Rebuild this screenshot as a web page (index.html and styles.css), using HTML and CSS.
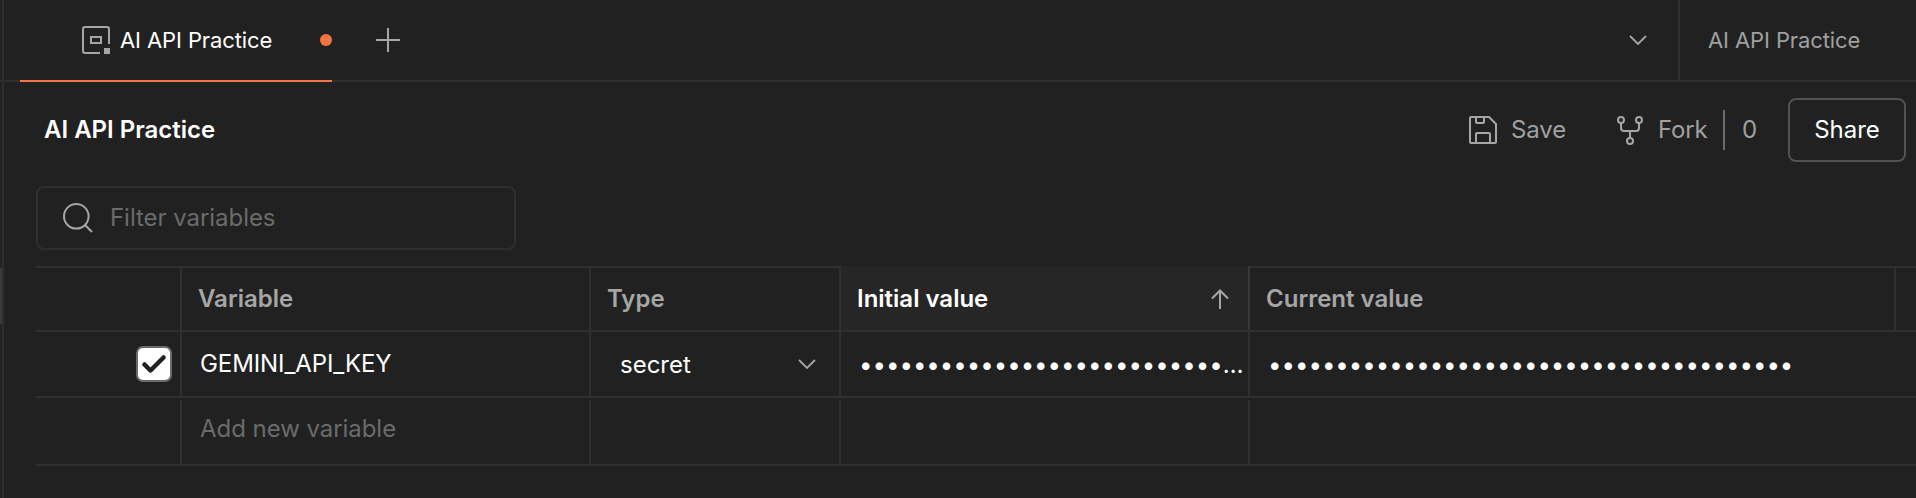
FILE: index.html
```html
<!DOCTYPE html>
<html lang="en">
<head>
<meta charset="utf-8">
<title>AI API Practice</title>
<link rel="stylesheet" href="styles.css">
</head>
<body>
<div class="app">
  <aside class="rail"><div class="rail-thumb"></div></aside>
  <div class="main">
    <header class="tabs">
      <div class="tab">
        <svg class="env-icon" width="28" height="28" viewBox="0 0 28 28"><path d="M27 18V3a2 2 0 0 0-2-2H3a2 2 0 0 0-2 2v22a2 2 0 0 0 2 2h15M9 11h10v6H9z"/><rect class="solid" x="22" y="22" width="6" height="6"/></svg>
        <span class="tab-name">AI API Practice</span>
        <span class="dirty"></span>
      </div>
      <svg class="plus" width="24" height="24" viewBox="0 0 24 24"><path d="M12 0v24M0 12h24"/></svg>
      <svg class="chevron tabs-chevron" width="18" height="11" viewBox="0 0 18 11"><path d="M1 1l8 8 8-8"/></svg>
      <div class="env-select">AI API Practice</div>
    </header>
    <section class="toolbar">
      <h1 class="title">AI API Practice</h1>
      <div class="save">
        <svg width="28" height="28" viewBox="0 0 28 28"><path d="M2 1h18l7 7v18a1 1 0 0 1-1 1H2a1 1 0 0 1-1-1V2a1 1 0 0 1 1-1zM7 1v5a1 1 0 0 0 1 1h6a1 1 0 0 0 1-1V1M7 27v-9a1 1 0 0 1 1-1h12a1 1 0 0 1 1 1v9"/></svg>
        <span class="save-label">Save</span>
      </div>
      <div class="fork">
        <svg width="26" height="29" viewBox="0 0 26 29"><circle cx="4" cy="4" r="3"/><circle cx="22" cy="4" r="3"/><circle cx="13" cy="25" r="3"/><path d="M4 7v5a3 3 0 0 0 3 3h12a3 3 0 0 0 3-3V7M13 15v7"/></svg>
        <span class="fork-label">Fork</span>
        <span class="fork-count">0</span>
      </div>
      <button class="share">Share</button>
    </section>
    <div class="filter">
      <svg width="30" height="30" viewBox="0 0 30 30"><circle cx="13.3" cy="13.3" r="12.3"/><path d="M22 22l7 7"/></svg>
      <span class="filter-text">Filter variables</span>
    </div>
    <div class="table">
      <div class="row head">
        <div class="cell"></div>
        <div class="cell">Variable</div>
        <div class="cell">Type</div>
        <div class="cell sorted"><span class="sorted-label">Initial value</span><svg class="arrow" width="18" height="20" viewBox="0 0 18 20"><path d="M9 20V1.5M1 9.5l8-8 8 8"/></svg></div>
        <div class="cell current-head">Current value</div>
        <div class="cell end"></div>
      </div>
      <div class="row">
        <div class="cell check-cell"><span class="checkbox"><svg width="24" height="19" viewBox="0 0 24 19"><path d="M2.5 9.5l6 6 13-13"/></svg></span></div>
        <div class="cell key">GEMINI_API_KEY</div>
        <div class="cell type"><span class="type-name">secret</span><svg class="chevron" width="18" height="11" viewBox="0 0 18 11"><path d="M1 1l8 8 8-8"/></svg></div>
        <div class="cell secret"><span class="dots">•••••••••••••••••••••••••••</span><span class="more">…</span></div>
        <div class="cell secret last"><span class="dots">•••••••••••••••••••••••••••••••••••••••</span></div>
      </div>
      <div class="row add">
        <div class="cell"></div>
        <div class="cell key">Add new variable</div>
        <div class="cell"></div>
        <div class="cell"></div>
        <div class="cell last"></div>
      </div>
    </div>
  </div>
</div>
</body>
</html>
```
FILE: styles.css
```css
* { box-sizing: border-box; }
body { margin: 0; background: #212121; color: #fff; font: 24px/30px Inter, "Liberation Sans", sans-serif; }
svg { display: block; flex: none; fill: none; stroke: #a6a6a6; stroke-width: 2; }
.app { display: flex; height: 498px; overflow: hidden; background: linear-gradient(#2f2f2f, #2f2f2f) 0 80px / 4px 2px no-repeat; }
.rail { flex: none; width: 4px; padding-top: 268px; border-right: 2px solid #2d2d2d; }
.rail-thumb { height: 56px; background: #3a3a3a; }
.main { flex: 1; min-width: 0; }

.tabs { display: flex; align-items: center; height: 82px; padding-left: 16px; border-bottom: 2px solid #2f2f2f; font-size: 22px; letter-spacing: -0.1px; white-space: nowrap; }
.tab { display: flex; align-items: center; width: 312px; height: 82px; margin-bottom: -2px; padding: 0 0 0 62px; border-bottom: 2px solid #f37542; }
.tab-name { margin-left: 10px; }
.env-icon .solid { fill: #a6a6a6; stroke: none; }
.dirty { width: 12px; height: 12px; margin-left: auto; border-radius: 50%; background: #f37542; }
.plus { margin-left: 44px; }
.chevron { stroke-width: 1.8; }
.tabs-chevron { margin-left: auto; }
.env-select { width: 238px; height: 80px; margin-left: 31px; padding-left: 28px; border-left: 2px solid #2f2f2f; color: #a0a0a0; line-height: 80px; }

.toolbar { display: flex; align-items: center; height: 96px; padding: 0 10px 0 40px; white-space: nowrap; color: #a0a0a0; }
.title { margin: 0 auto 0 0; color: #fff; font-size: 24px; font-weight: 600; }
.save { display: flex; align-items: center; width: 148px; gap: 14px; letter-spacing: -0.1px; }
.fork { display: flex; align-items: center; width: 171px; }
.fork-label { width: 65px; margin-left: 15px; letter-spacing: -0.2px; }
.fork-count { height: 40px; padding-left: 17px; border-left: 2px solid #6b6b6b; line-height: 40px; }
.share { width: 118px; height: 64px; padding: 0; border: 2px solid #525252; border-radius: 8px; background: none; color: #fff; font: inherit; }

.filter { display: flex; align-items: center; width: 480px; height: 64px; margin: 8px 0 16px 32px; padding-left: 25px; border: 2px solid #2f2f2f; border-radius: 8px; color: #6b6b6b; letter-spacing: -0.05px; }
.filter-text { margin-left: 17px; }

.table { margin-left: 32px; border-top: 2px solid #2f2f2f; white-space: nowrap; }
.row { display: grid; grid-template-columns: 146px 409px 250px 409px 646px 20px; height: 66px; border-bottom: 2px solid #2f2f2f; letter-spacing: -0.1px; }
.head { height: 64px; color: #a6a6a6; font-weight: 600; letter-spacing: 0; }
.add { height: 68px; padding-top: 2px; color: #6b6b6b; letter-spacing: -0.05px; }
.cell { display: flex; align-items: center; min-width: 0; padding-left: 16px; border-right: 2px solid #2f2f2f; overflow: hidden; }
.cell.last, .cell.end { border-right: 0; }
.sorted { justify-content: space-between; margin-top: -2px; padding: 2px 19px 0 16px; border-right-color: #383838; background: #262626; color: #fff; }
.key { padding-left: 18px; }
.add .key { padding-bottom: 7px; }
.check-cell { justify-content: flex-end; padding-right: 8px; }
.checkbox { display: grid; place-items: center; width: 36px; height: 36px; border: 2px solid #6b6b6b; border-radius: 7px; background: #fff; }
.checkbox svg { stroke: #212121; stroke-width: 4.5; stroke-linecap: round; stroke-linejoin: round; }
.type { justify-content: space-between; padding: 0 23px 0 29px; }
.type-name, .secret { padding-top: 2px; letter-spacing: 0; }
.secret { padding-left: 18px; }
.dots { letter-spacing: -0.03px; }
```
